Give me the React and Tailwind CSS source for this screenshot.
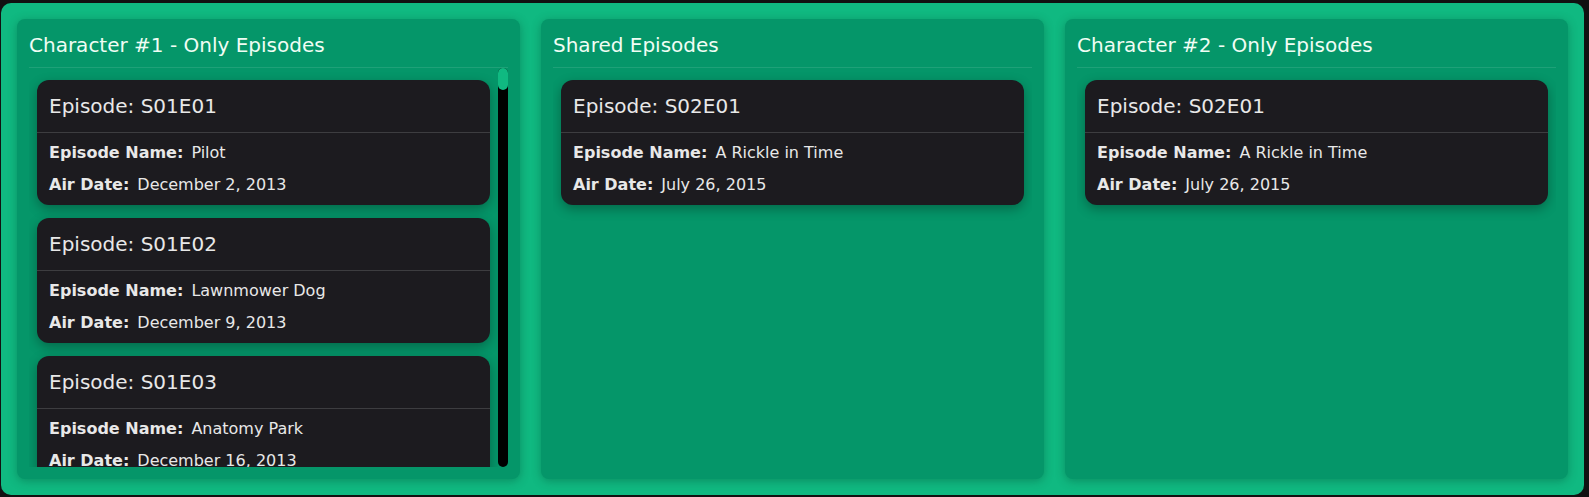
import React from "react";

const col1 = [
  { code: "S01E01", name: "Pilot", date: "December 2, 2013" },
  { code: "S01E02", name: "Lawnmower Dog", date: "December 9, 2013" },
  { code: "S01E03", name: "Anatomy Park", date: "December 16, 2013" },
  { code: "S01E04", name: "M. Night Shaym-Aliens!", date: "January 13, 2014" },
];
const shared = [{ code: "S02E01", name: "A Rickle in Time", date: "July 26, 2015" }];
const col3 = [{ code: "S02E01", name: "A Rickle in Time", date: "July 26, 2015" }];

function Card({ ep }) {
  return (
    <div className="shrink-0 rounded-xl bg-[#1c1b1f] text-[#e8e8e8] shadow-[0_4px_12px_rgba(0,0,0,0.3)]">
      <div className="border-b border-[#3d3d40] px-3 py-3 text-xl leading-7">
        Episode: {ep.code}
      </div>
      <div className="flex flex-col gap-2 px-3 py-2 text-base leading-6">
        <div className="flex gap-2">
          <span className="font-bold">Episode Name:</span>
          <span>{ep.name}</span>
        </div>
        <div className="flex gap-2">
          <span className="font-bold">Air Date:</span>
          <span>{ep.date}</span>
        </div>
      </div>
    </div>
  );
}

function Panel({ title, episodes, scroll }) {
  return (
    <div className="flex min-h-0 min-w-0 flex-col rounded-lg bg-[#059669] p-3 shadow-[0_2px_10px_rgba(0,60,40,0.35)]">
      <div className="border-b border-white/10 pb-2 text-xl leading-7 text-[#f0fdf4]">
        {title}
      </div>
      <div className="flex min-h-0 flex-1">
        <div className="flex min-w-0 flex-1 flex-col gap-[13px] overflow-hidden px-2 pt-3">
          {episodes.map((ep, i) => (
            <Card key={i} ep={ep} />
          ))}
        </div>
        {scroll && (
          <div className="flex w-[10px] shrink-0 flex-col rounded-full bg-black">
            <div className="h-[22px] w-full rounded-full bg-[#10b981]" />
          </div>
        )}
      </div>
    </div>
  );
}

export default function App() {
  return (
    <div
      className="h-[497px] w-full bg-[#111111] pt-[3px] pb-[2px] pl-[1px] pr-[5px]"
      style={{ fontFamily: '"DejaVu Sans", sans-serif' }}
    >
      <div className="grid h-[492px] grid-cols-3 gap-[21px] rounded-[10px] bg-[#10b981] p-4">
        <Panel title="Character #1 - Only Episodes" episodes={col1} scroll />
        <Panel title="Shared Episodes" episodes={shared} />
        <Panel title="Character #2 - Only Episodes" episodes={col3} />
      </div>
    </div>
  );
}
